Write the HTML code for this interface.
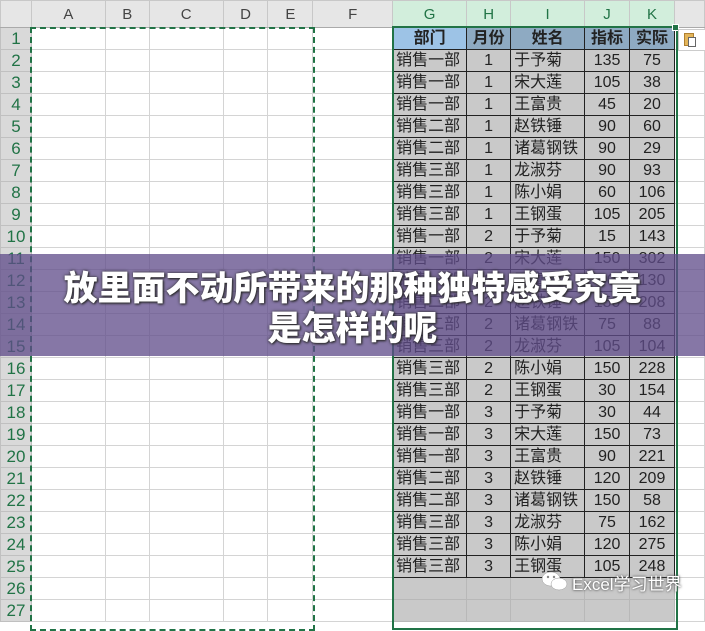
<!DOCTYPE html>
<html><head><meta charset="utf-8"><style>
body{margin:0;width:705px;height:611px;overflow:hidden;background:#fff;font-family:"Liberation Sans","Noto Sans CJK SC",sans-serif;position:relative}
table{border-collapse:collapse;table-layout:fixed;position:absolute;left:0;top:0}
td{border:1px solid #d4d4d4;height:21px;padding:0;font-size:16px;color:#222;white-space:nowrap;overflow:hidden;line-height:21px}
tr.h td{height:26px;background:#e6e6e6;color:#444;text-align:center;font-size:15px;border-color:#c8c8c8;border-bottom:1px solid #aaa}
tr.h td.g{background:#d2eedc;color:#217346}
td.r{background:#d9d9d9;color:#217346;text-align:center;font-size:17px;border-color:#c0c0c0}
td.d{background:#c9c9c9;border:1px solid #222}
td.c{text-align:center}
td.l{padding-left:3px}
td.e{background:#c9c9c9;border-color:#b8b8b8}
td.hb{background:#9dc3e6;font-weight:bold;text-align:center;border:1px solid #222}
td.hs{background:#8eaac2;font-weight:bold;text-align:center;border:1px solid #222}
.sel{position:absolute;border:2px dashed #217346;left:30px;top:27px;width:281px;height:600px}
.sel2{position:absolute;border:2px solid #217346;left:392px;top:26px;width:282px;height:600px}
.ov{position:absolute;left:0;top:254px;width:705px;height:102px;background:rgba(96,76,138,0.76)}
.t{position:absolute;left:0;width:705px;text-align:center;color:#fff;font-weight:900;font-size:34px;line-height:40px;font-family:"Noto Sans CJK SC",sans-serif;text-shadow:0 0 3px #333,1px 1px 2px #222}
.wm{position:absolute;left:572px;top:570px;color:#fff;font-size:17px;text-shadow:0 0 2px #555,0 0 3px #777}
</style></head><body>
<table>
<colgroup><col style="width:31px"><col style="width:74px"><col style="width:44px"><col style="width:74px"><col style="width:45px"><col style="width:45px"><col style="width:80px"><col style="width:74px"><col style="width:44px"><col style="width:74px"><col style="width:45px"><col style="width:45px"><col style="width:30px"></colgroup>
<tr class="h"><td style="background:#e6e6e6"></td><td>A</td><td>B</td><td>C</td><td>D</td><td>E</td><td>F</td><td class="g">G</td><td class="g">H</td><td class="g">I</td><td class="g">J</td><td class="g">K</td><td></td></tr>
<tr><td class="r">1</td><td></td><td></td><td></td><td></td><td></td><td></td><td class="hb">部门</td><td class="hs">月份</td><td class="hs">姓名</td><td class="hs">指标</td><td class="hs">实际</td><td></td></tr>
<tr><td class="r">2</td><td></td><td></td><td></td><td></td><td></td><td></td><td class="d l">销售一部</td><td class="d c">1</td><td class="d l">于予菊</td><td class="d c">135</td><td class="d c">75</td><td></td></tr>
<tr><td class="r">3</td><td></td><td></td><td></td><td></td><td></td><td></td><td class="d l">销售一部</td><td class="d c">1</td><td class="d l">宋大莲</td><td class="d c">105</td><td class="d c">38</td><td></td></tr>
<tr><td class="r">4</td><td></td><td></td><td></td><td></td><td></td><td></td><td class="d l">销售一部</td><td class="d c">1</td><td class="d l">王富贵</td><td class="d c">45</td><td class="d c">20</td><td></td></tr>
<tr><td class="r">5</td><td></td><td></td><td></td><td></td><td></td><td></td><td class="d l">销售二部</td><td class="d c">1</td><td class="d l">赵铁锤</td><td class="d c">90</td><td class="d c">60</td><td></td></tr>
<tr><td class="r">6</td><td></td><td></td><td></td><td></td><td></td><td></td><td class="d l">销售二部</td><td class="d c">1</td><td class="d l">诸葛钢铁</td><td class="d c">90</td><td class="d c">29</td><td></td></tr>
<tr><td class="r">7</td><td></td><td></td><td></td><td></td><td></td><td></td><td class="d l">销售三部</td><td class="d c">1</td><td class="d l">龙淑芬</td><td class="d c">90</td><td class="d c">93</td><td></td></tr>
<tr><td class="r">8</td><td></td><td></td><td></td><td></td><td></td><td></td><td class="d l">销售三部</td><td class="d c">1</td><td class="d l">陈小娟</td><td class="d c">60</td><td class="d c">106</td><td></td></tr>
<tr><td class="r">9</td><td></td><td></td><td></td><td></td><td></td><td></td><td class="d l">销售三部</td><td class="d c">1</td><td class="d l">王钢蛋</td><td class="d c">105</td><td class="d c">205</td><td></td></tr>
<tr><td class="r">10</td><td></td><td></td><td></td><td></td><td></td><td></td><td class="d l">销售一部</td><td class="d c">2</td><td class="d l">于予菊</td><td class="d c">15</td><td class="d c">143</td><td></td></tr>
<tr><td class="r">11</td><td></td><td></td><td></td><td></td><td></td><td></td><td class="d l">销售一部</td><td class="d c">2</td><td class="d l">宋大莲</td><td class="d c">150</td><td class="d c">302</td><td></td></tr>
<tr><td class="r">12</td><td></td><td></td><td></td><td></td><td></td><td></td><td class="d l">销售一部</td><td class="d c">2</td><td class="d l">王富贵</td><td class="d c">90</td><td class="d c">130</td><td></td></tr>
<tr><td class="r">13</td><td></td><td></td><td></td><td></td><td></td><td></td><td class="d l">销售二部</td><td class="d c">2</td><td class="d l">赵铁锤</td><td class="d c">150</td><td class="d c">208</td><td></td></tr>
<tr><td class="r">14</td><td></td><td></td><td></td><td></td><td></td><td></td><td class="d l">销售二部</td><td class="d c">2</td><td class="d l">诸葛钢铁</td><td class="d c">75</td><td class="d c">88</td><td></td></tr>
<tr><td class="r">15</td><td></td><td></td><td></td><td></td><td></td><td></td><td class="d l">销售三部</td><td class="d c">2</td><td class="d l">龙淑芬</td><td class="d c">105</td><td class="d c">104</td><td></td></tr>
<tr><td class="r">16</td><td></td><td></td><td></td><td></td><td></td><td></td><td class="d l">销售三部</td><td class="d c">2</td><td class="d l">陈小娟</td><td class="d c">150</td><td class="d c">228</td><td></td></tr>
<tr><td class="r">17</td><td></td><td></td><td></td><td></td><td></td><td></td><td class="d l">销售三部</td><td class="d c">2</td><td class="d l">王钢蛋</td><td class="d c">30</td><td class="d c">154</td><td></td></tr>
<tr><td class="r">18</td><td></td><td></td><td></td><td></td><td></td><td></td><td class="d l">销售一部</td><td class="d c">3</td><td class="d l">于予菊</td><td class="d c">30</td><td class="d c">44</td><td></td></tr>
<tr><td class="r">19</td><td></td><td></td><td></td><td></td><td></td><td></td><td class="d l">销售一部</td><td class="d c">3</td><td class="d l">宋大莲</td><td class="d c">150</td><td class="d c">73</td><td></td></tr>
<tr><td class="r">20</td><td></td><td></td><td></td><td></td><td></td><td></td><td class="d l">销售一部</td><td class="d c">3</td><td class="d l">王富贵</td><td class="d c">90</td><td class="d c">221</td><td></td></tr>
<tr><td class="r">21</td><td></td><td></td><td></td><td></td><td></td><td></td><td class="d l">销售二部</td><td class="d c">3</td><td class="d l">赵铁锤</td><td class="d c">120</td><td class="d c">209</td><td></td></tr>
<tr><td class="r">22</td><td></td><td></td><td></td><td></td><td></td><td></td><td class="d l">销售二部</td><td class="d c">3</td><td class="d l">诸葛钢铁</td><td class="d c">150</td><td class="d c">58</td><td></td></tr>
<tr><td class="r">23</td><td></td><td></td><td></td><td></td><td></td><td></td><td class="d l">销售三部</td><td class="d c">3</td><td class="d l">龙淑芬</td><td class="d c">75</td><td class="d c">162</td><td></td></tr>
<tr><td class="r">24</td><td></td><td></td><td></td><td></td><td></td><td></td><td class="d l">销售三部</td><td class="d c">3</td><td class="d l">陈小娟</td><td class="d c">120</td><td class="d c">275</td><td></td></tr>
<tr><td class="r">25</td><td></td><td></td><td></td><td></td><td></td><td></td><td class="d l">销售三部</td><td class="d c">3</td><td class="d l">王钢蛋</td><td class="d c">105</td><td class="d c">248</td><td></td></tr>
<tr><td class="r">26</td><td></td><td></td><td></td><td></td><td></td><td></td><td class="e"></td><td class="e"></td><td class="e"></td><td class="e"></td><td class="e"></td><td></td></tr>
<tr><td class="r">27</td><td></td><td></td><td></td><td></td><td></td><td></td><td class="e"></td><td class="e"></td><td class="e"></td><td class="e"></td><td class="e"></td><td></td></tr>
</table>
<div class="sel"></div>
<div class="sel2"></div>
<div style="position:absolute;left:672px;top:24px;width:5px;height:5px;background:#217346;border:1px solid #fff"></div>
<div style="position:absolute;left:678px;top:29px;width:30px;height:20px;background:#fff;border:1px solid #ccc"></div>
<div style="position:absolute;left:684px;top:33px;width:8px;height:11px;background:#e3b55a;border:1px solid #b08030"></div>
<div style="position:absolute;left:688px;top:37px;width:6px;height:8px;background:#fff;border:1px solid #666"></div>
<div class="ov"></div>
<div class="t" style="top:266px">放里面不动所带来的那种独特感受究竟</div>
<div class="t" style="top:306px">是怎样的呢</div>
<svg style="position:absolute;left:540px;top:570px" width="30" height="22" viewBox="0 0 30 22"><ellipse cx="11" cy="9" rx="9" ry="7" fill="#fff" stroke="#999" stroke-width=".5"/><ellipse cx="19" cy="14" rx="8" ry="6" fill="#fff" stroke="#999" stroke-width=".5"/><circle cx="8" cy="7" r="1.2" fill="#888"/><circle cx="14" cy="7" r="1.2" fill="#888"/></svg>
<div class="wm">Excel学习世界</div>
</body></html>
